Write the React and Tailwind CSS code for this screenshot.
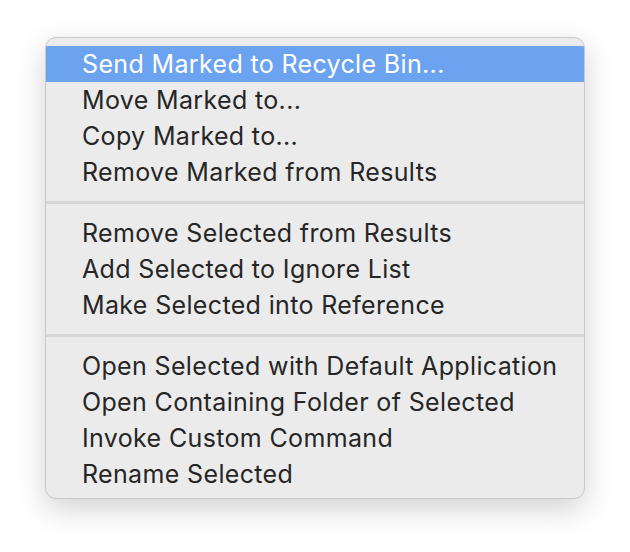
const groups = [
  ['Send Marked to Recycle Bin...', 'Move Marked to...', 'Copy Marked to...', 'Remove Marked from Results'],
  ['Remove Selected from Results', 'Add Selected to Ignore List', 'Make Selected into Reference'],
  ['Open Selected with Default Application', 'Open Containing Folder of Selected', 'Invoke Custom Command', 'Rename Selected'],
];

function App() {
  return (
    <div className="w-[630px] h-[552px] bg-white pt-[37px] pl-[45px] font-['Inter',sans-serif]">
      <div className="w-[540px] h-[462px] rounded-[11px] border border-[#c9c9c9] bg-[#ebebeb] shadow-[0_10px_30px_rgba(0,0,0,0.18)] overflow-hidden py-[8px] flex flex-col">
        {groups.map((items, gi) => (
          <div key={gi} className="flex flex-col">
            {gi > 0 && (
              <div className="py-[11px]">
                <div className="h-[3px] bg-[#d6d6d6]" />
              </div>
            )}
            {items.map((label, i) => {
              const active = gi === 0 && i === 0;
              return (
                <div
                  key={label}
                  className={`h-[36px] flex items-center pl-[36px] pt-[1px] text-[25px] leading-none tracking-[0.35px] ${
                    active ? 'bg-[#6ca3f1] text-white' : 'text-[#262626]'
                  }`}
                >
                  {label}
                </div>
              );
            })}
          </div>
        ))}
      </div>
    </div>
  );
}

export default App;
